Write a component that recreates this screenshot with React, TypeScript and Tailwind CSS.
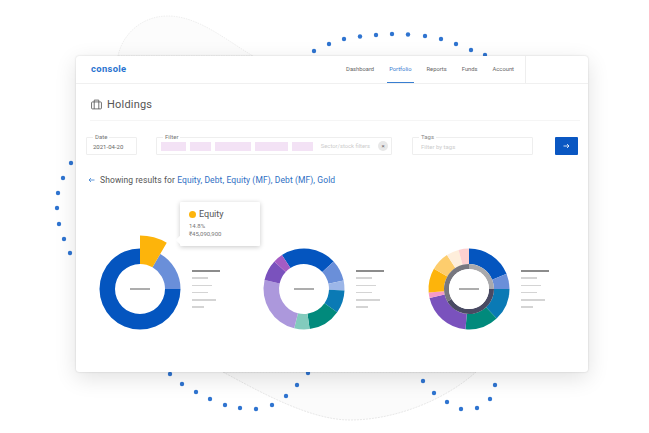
import React from "react";

const TOP_DOTS = [[314, 51], [329, 44], [344, 39], [360, 36.5], [376, 35], [392, 34], [408, 34.5], [425, 36], [441, 39], [456, 44], [471, 50], [485, 55]];
const LEFT_DOTS = [[71, 163], [63, 178], [58, 193], [57, 208], [59, 224], [64, 239], [70, 253]];
const BOTTOM_DOTS = [[170, 374], [182, 384], [196, 392], [210, 399], [225, 405], [240, 408], [256, 409], [272, 405], [286, 396], [297, 385], [308, 373], [423, 381], [434, 393], [447, 402], [461, 409], [477, 408], [490, 399], [495, 385]];

type Slice = { from: number; to: number; color: string };

// angle in degrees, clockwise from 12 o'clock
function arc(cx: number, cy: number, r0: number, r1: number, from: number, to: number) {
  const pt = (r: number, a: number) => {
    const t = ((a - 90) * Math.PI) / 180;
    return `${(cx + r * Math.cos(t)).toFixed(2)} ${(cy + r * Math.sin(t)).toFixed(2)}`;
  };
  const large = to - from > 180 ? 1 : 0;
  return `M${pt(r1, from)}A${r1} ${r1} 0 ${large} 1 ${pt(r1, to)}L${pt(r0, to)}A${r0} ${r0} 0 ${large} 0 ${pt(r0, from)}Z`;
}

const Donut = ({ slices, inner = 25, extra }: { slices: Slice[]; inner?: number; extra?: React.ReactNode }) => (
  <svg width="90" height="90" viewBox="0 0 90 90" className="shrink-0 overflow-visible">
    {slices.map((s) => (
      <path key={s.from} d={arc(45, 45, inner, 40.5, s.from, s.to)} fill={s.color} />
    ))}
    {extra}
    <rect x="35" y="44.3" width="20" height="1.4" fill="#8a8a8a" />
  </svg>
);

const Legend = () => (
  <div className="flex w-[28px] flex-col gap-[5.8px]">
    <div className="h-[1.5px] w-[28px] bg-[#8c8c8c]" />
    <div className="h-[1.5px] w-[16px] bg-[#d4d4d4]" />
    <div className="h-[1.5px] w-[20px] bg-[#d4d4d4]" />
    <div className="h-[1.5px] w-[16px] bg-[#d4d4d4]" />
    <div className="h-[1.5px] w-[24px] bg-[#d4d4d4]" />
    <div className="h-[1.5px] w-[12px] bg-[#d4d4d4]" />
  </div>
);

const FieldLabel = ({ children }: { children: React.ReactNode }) => (
  <span className="absolute -top-[5px] left-[6px] bg-white px-[2px] text-[6px] leading-[8px] text-[#777]">{children}</span>
);

const navItems = ["Dashboard", "Portfolio", "Reports", "Funds", "Account"];
const chips = [25, 21, 36, 33, 21];

export default function App() {
  return (
    <div className="relative h-[433px] w-[649px] overflow-hidden bg-white font-['Roboto',sans-serif]">
      {/* blob and dotted ring behind the card */}
      <svg width="649" height="433" viewBox="0 0 649 433" className="absolute inset-0">
        <path d="M118 56C122 36 140 16 168 16C198 16 226 40 253 56Z" fill="#fcfcfc" stroke="#e2e2e2" strokeWidth="0.6" strokeDasharray="1.5 1" />
        <path d="M223 372C260 392 310 420 350 420C395 420 445 400 476 372Z" fill="#fbfbfb" stroke="#d8d8d8" strokeWidth="0.6" strokeDasharray="2 1" />
        {[...TOP_DOTS, ...LEFT_DOTS, ...BOTTOM_DOTS].map(([x, y]) => (
          <circle key={`${x}-${y}`} cx={x} cy={y} r="2.2" fill="#2f74d0" />
        ))}
      </svg>

      <div className="relative ml-[76px] mt-[56px] h-[316px] w-[512px] rounded-[3px] bg-white shadow-[0_0_2px_rgba(0,0,0,0.18),0_6px_22px_rgba(0,0,0,0.12)]">
        {/* header */}
        <div className="flex h-[28px] items-center border-b border-[#f0f0f0] pl-[15px] pr-[62px]">
          <span className="text-[9.4px] font-bold tracking-[0.35px] text-[#2a74d0]">console</span>
          <nav className="ml-auto flex h-[27px] items-center gap-[15px] border-r border-[#eee] pr-[11px] text-[5.8px] text-[#666]">
            {navItems.map((item) => (
              <span
                key={item}
                className={
                  item === "Portfolio"
                    ? "-mx-[2px] flex h-[27px] items-center border-b border-[#387ed1] px-[2px] text-[#387ed1]"
                    : ""
                }
              >
                {item}
              </span>
            ))}
          </nav>
        </div>

        <div className="px-[15px] pt-[13px]">
          {/* title */}
          <div className="flex h-[15px] items-center gap-[5px] text-[#555]">
            <svg width="11" height="11" viewBox="0 0 12 12" fill="none" stroke="#555" strokeWidth="0.9">
              <rect x="0.6" y="3.2" width="10.8" height="7.6" rx="1" />
              <path d="M3.5 3.2V1.2H8.5V3.2M3.5 3.2V10.8M8.5 3.2V10.8" />
            </svg>
            <span className="text-[11px] leading-[15px] tracking-[0.2px]">Holdings</span>
          </div>
          <div className="-ml-px -mr-[7px] mt-[8px] h-px bg-[#f5f5f5]" />

          {/* filters */}
          <div className="-ml-[5px] mr-[-7px] mt-[16px] flex items-start text-[6px]">
            <div className="relative flex h-[18px] w-[51px] items-center rounded-[1px] border border-[#eee] pl-[6px] text-[#666]">
              <FieldLabel>Date</FieldLabel>
              2021-04-20
            </div>
            <div className="relative ml-[19px] flex h-[18px] w-[236px] items-center gap-[4px] rounded-[1px] border border-[#eee] pl-[4px] pr-[3px]">
              <FieldLabel>Filter</FieldLabel>
              {chips.map((w, i) => (
                <div key={i} style={{ width: w }} className="h-[9px] bg-[#f3e2f5]" />
              ))}
              <span className="ml-auto whitespace-nowrap text-[5.8px] text-[#ccc]">Sector/stock filters</span>
              <span className="ml-[4px] flex size-[10px] shrink-0 items-center justify-center rounded-full bg-[#e8e8e8] text-[6px] leading-none text-[#666]">×</span>
            </div>
            <div className="relative ml-[20px] flex h-[18px] w-[121px] items-center rounded-[1px] border border-[#eee] pl-[8px] text-[#ccc]">
              <FieldLabel>
                <span className="text-[#888]">Tags</span>
              </FieldLabel>
              Filter by tags
            </div>
            <button className="ml-[22px] flex h-[18px] w-[23px] items-center justify-center rounded-[1px] bg-[#0a57c2]">
              <svg width="7" height="6" viewBox="0 0 7 6" fill="none" stroke="#fff" strokeWidth="0.8">
                <path d="M0.5 3H6M4 1L6 3L4 5" />
              </svg>
            </button>
          </div>

          {/* results */}
          <div className="-ml-[3px] mt-[19px] flex h-[12px] items-center text-[8.5px] tracking-[0.1px]">
            <svg width="7" height="6" viewBox="0 0 7 6" fill="none" stroke="#387ed1" strokeWidth="0.8" className="mr-[5px]">
              <path d="M6.5 3H1M3 1L1 3L3 5" />
            </svg>
            <span className="whitespace-pre text-[#555]">Showing results for </span>
            <span className="text-[#2f6fc4]">Equity, Debt, Equity (MF), Debt (MF), Gold</span>
          </div>

          {/* charts */}
          <div className="ml-[3.5px] mt-[58px] flex items-center">
            <Donut
              slices={[
                { from: 90, to: 360, color: "#0455bf" },
                { from: 30, to: 90, color: "#6a8fd9" },
              ]}
              extra={<path d={arc(45, 45, 25, 53.5, 0, 30)} fill="#fdb40b" />}
            />
            <div className="ml-[7.5px]">
              <Legend />
            </div>
            <div className="ml-[39px]">
              <Donut
                slices={[
                  { from: -33, to: 47, color: "#0455bf" },
                  { from: 47, to: 78, color: "#6a8fd9" },
                  { from: 78, to: 92, color: "#9cb6e8" },
                  { from: 92, to: 125, color: "#0a7ab5" },
                  { from: 125, to: 172, color: "#018a7c" },
                  { from: 172, to: 194, color: "#82cbbd" },
                  { from: 194, to: 283, color: "#ac98dc" },
                  { from: 283, to: 313, color: "#7a52bd" },
                  { from: 313, to: 327, color: "#a45cc4" },
                ]}
              />
            </div>
            <div className="ml-[7px]">
              <Legend />
            </div>
            <div className="ml-[39.5px]">
              <Donut
                slices={[
                  { from: 0, to: 68, color: "#0455bf" },
                  { from: 68, to: 90, color: "#6a8fd9" },
                  { from: 90, to: 137, color: "#0a7ab5" },
                  { from: 137, to: 185, color: "#018a7c" },
                  { from: 185, to: 257, color: "#7a52bd" },
                  { from: 257, to: 265, color: "#f59ac8" },
                  { from: 265, to: 300, color: "#fdb40b" },
                  { from: 300, to: 327, color: "#fdcd6d" },
                  { from: 327, to: 345, color: "#feeedb" },
                  { from: 345, to: 360, color: "#fdd0d0" },
                ]}
                extra={
                  <>
                    <path d={arc(45, 45, 20, 25, 0, 90)} fill="#a9a9ac" />
                    <path d={arc(45, 45, 20, 25, 90, 240)} fill="#494a63" />
                    <path d={arc(45, 45, 20, 25, 240, 360)} fill="#77777f" />
                    <circle cx="45" cy="45" r="20" fill="#fff" />
                  </>
                }
              />
            </div>
            <div className="ml-[7.5px]">
              <Legend />
            </div>
          </div>
        </div>

        {/* tooltip over first chart */}
        <div className="absolute left-[104px] top-[146px] h-[44px] w-[80px] rounded-[1px] bg-white pl-[9px] pt-[6px] shadow-[0_1px_5px_rgba(0,0,0,0.22)]">
          <div className="absolute -left-[3px] bottom-[3px] size-[6px] rotate-45 bg-white" />
          <div className="flex items-center gap-[3px] text-[9px] leading-[12px] text-[#555]">
            <span className="size-[7px] rounded-full bg-[#fdb40b]" />
            Equity
          </div>
          <div className="mt-[2px] text-[6px] leading-[8px] text-[#777]">14.8%</div>
          <div className="text-[6px] leading-[8px] text-[#777]">₹45,090,900</div>
        </div>
      </div>
    </div>
  );
}
